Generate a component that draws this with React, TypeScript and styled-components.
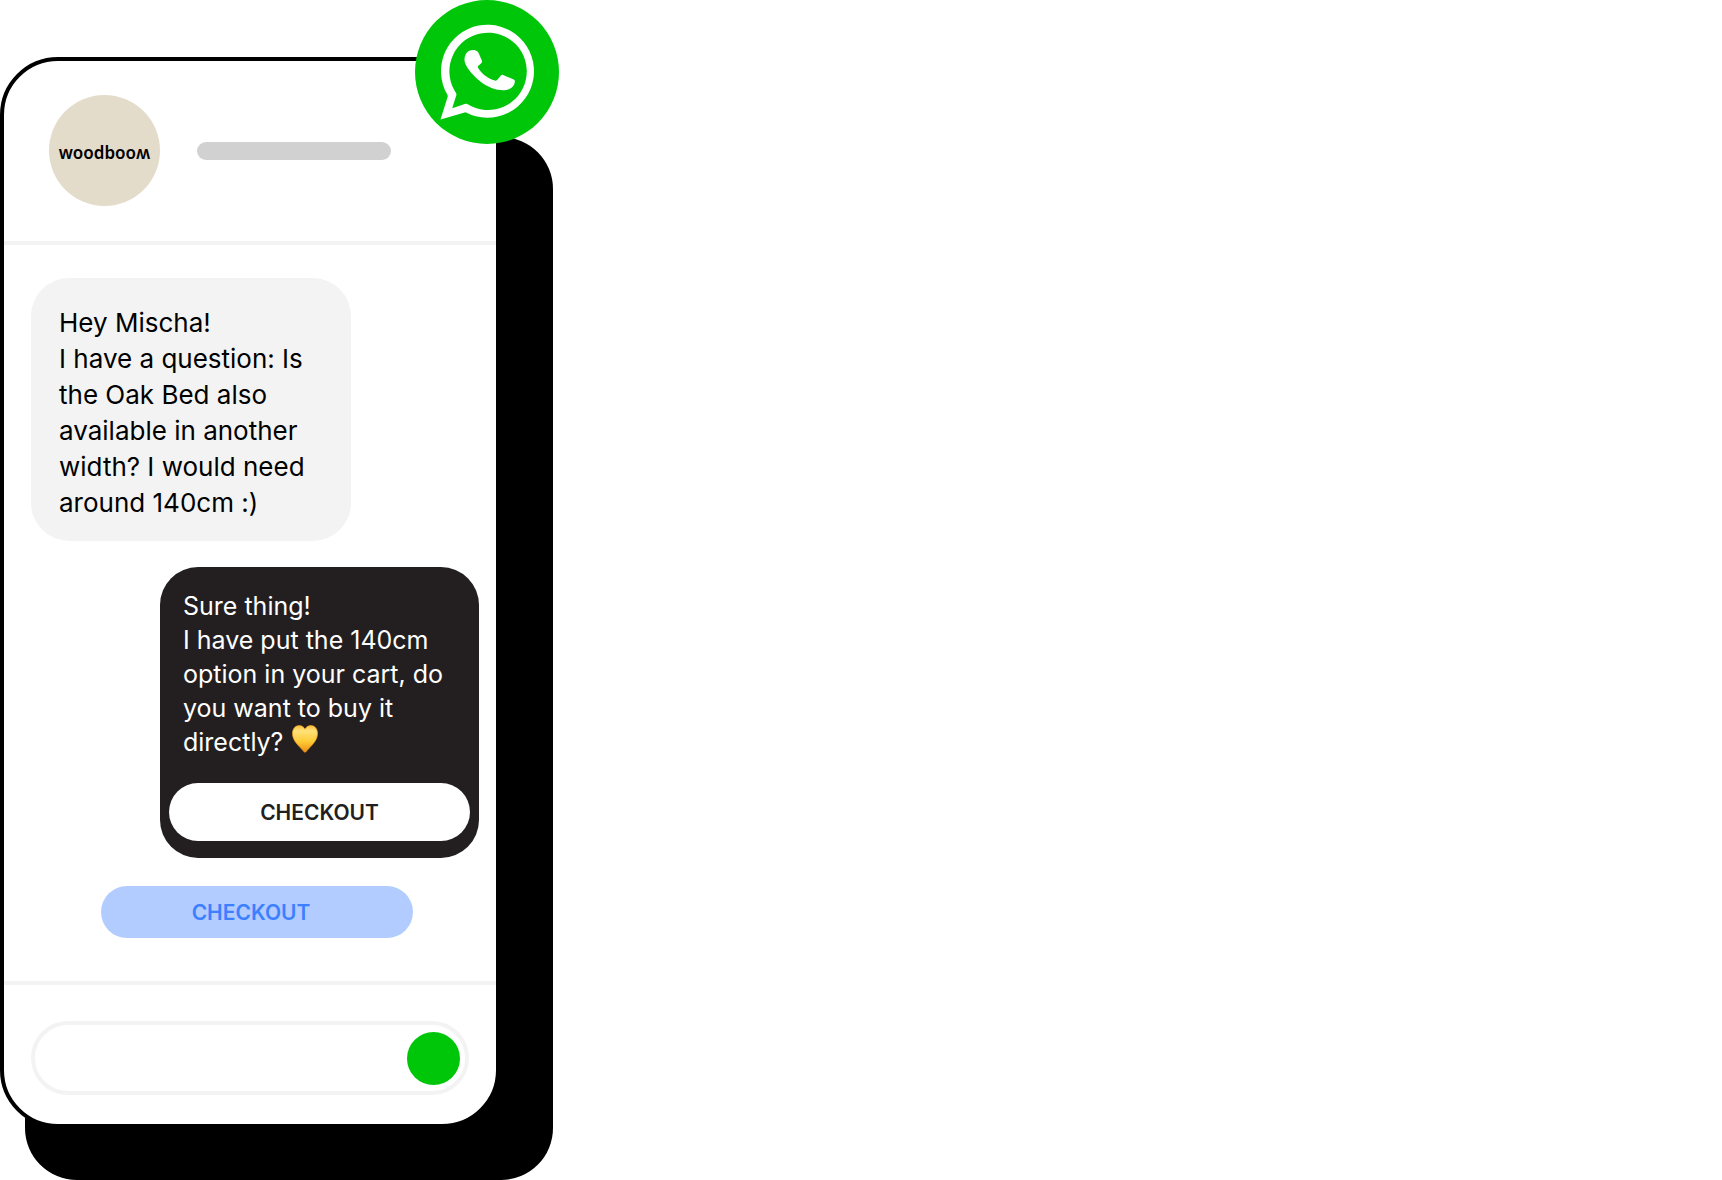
import React from "react";
import styled, { createGlobalStyle } from "styled-components";

const GlobalStyle = createGlobalStyle`
  *, *::before, *::after { box-sizing: border-box; }
  body { margin: 0; background: #fff; }
`;

const Stage = styled.main`
  position: relative;
  isolation: isolate;
  width: 100%;
  max-width: 553px;
  padding: 57px 53px 52px 0;
  font-family: Inter, "Liberation Sans", sans-serif;

  &::before {
    content: "";
    position: absolute;
    z-index: -1;
    inset: 137px 0 0 25px;
    border-radius: 52px;
    background: #000;
  }
`;

const Phone = styled.section`
  display: flex;
  flex-direction: column;
  border: 4px solid #000;
  border-radius: 58px;
  background: #fff;
`;

const Badge = styled.svg`
  position: absolute;
  top: 0;
  right: -6px;
  width: 144px;
  height: 144px;
`;

const Header = styled.header`
  display: flex;
  align-items: center;
  gap: 37px;
  padding: 34px 45px 35px;
  border-bottom: 4px solid #f3f3f3;
`;

const Avatar = styled.div`
  display: flex;
  align-items: center;
  justify-content: center;
  flex: none;
  width: 111px;
  height: 111px;
  padding-top: 4px;
  border-radius: 50%;
  background: #e4dccb;
  color: #000;
  font: 600 17px/24px "Noto Sans", sans-serif;
`;

const NameBar = styled.div`
  width: 194px;
  height: 18px;
  border-radius: 9px;
  background: #d1d1d1;
`;

const Messages = styled.div`
  display: flex;
  flex-direction: column;
  padding: 33px 17px 43px 27px;
`;

const Bubble = styled.article<{ $mine?: boolean }>`
  display: flex;
  flex-direction: column;
  gap: 24px;
  align-self: ${(p) => (p.$mine ? "flex-end" : "flex-start")};
  width: 100%;
  max-width: ${(p) => (p.$mine ? 319 : 320)}px;
  margin-bottom: ${(p) => (p.$mine ? 28 : 26)}px;
  padding: ${(p) => (p.$mine ? "22px 9px 17px" : "27px 9px 20px")};
  border-radius: 38px;
  background: ${(p) => (p.$mine ? "#231f20" : "#f3f3f3")};
  color: ${(p) => (p.$mine ? "#fff" : "#000")};
`;

const Text = styled.p<{ $mine?: boolean }>`
  margin: 0;
  padding: 0 ${(p) => (p.$mine ? 14 : 19)}px;
  font-size: ${(p) => (p.$mine ? 25 : 26)}px;
  line-height: ${(p) => (p.$mine ? 34 : 36)}px;
  white-space: nowrap;
`;

const HeartIcon = styled.svg`
  width: 26px;
  height: 28px;
  margin-left: 2px;
  vertical-align: -2px;
`;

const Pill = styled.button<{ $reply?: boolean }>`
  display: flex;
  align-items: center;
  justify-content: center;
  width: ${(p) => (p.$reply ? "312px" : "100%")};
  height: ${(p) => (p.$reply ? 52 : 58)}px;
  margin: 0 0 0 ${(p) => (p.$reply ? 70 : 0)}px;
  padding: 1px ${(p) => (p.$reply ? 12 : 0)}px 0 0;
  border: 0;
  border-radius: 30px;
  background: ${(p) => (p.$reply ? "#b3ccff" : "#fff")};
  color: ${(p) => (p.$reply ? "#3d80ff" : "#231f20")};
  font: 600 21px/28px Inter, "Liberation Sans", sans-serif;
  cursor: pointer;
`;

const Composer = styled.form`
  display: flex;
  padding: 36px 27px 29px;
  border-top: 4px solid #f3f3f3;
`;

const Field = styled.div`
  display: flex;
  align-items: center;
  flex: 1;
  min-width: 0;
  height: 74px;
  padding: 0 5px 0 24px;
  border: 4px solid #f3f3f3;
  border-radius: 37px;
`;

const Input = styled.input`
  flex: 1;
  width: 100%;
  min-width: 0;
  border: 0;
  outline: 0;
  background: transparent;
  font: 24px/34px Inter, sans-serif;
`;

const Send = styled.button`
  flex: none;
  width: 53px;
  height: 53px;
  padding: 0;
  border: 0;
  border-radius: 50%;
  background: #00c60a;
  cursor: pointer;
`;

function WhatsAppBadge() {
  return (
    <Badge viewBox="0 0 144 144" role="img" aria-label="WhatsApp">
      <circle cx="72" cy="72" r="72" fill="#00c60a" />
      <g transform="translate(0 .6)" fill="#fff">
        <path
          fillRule="evenodd"
          d="M25.5 119 L32.6 96.5 Q33 95.4 32.4 94.2 A46.5 46.5 0 1 1 50.5 111.6 Z M37.2 107.7 L50.5 103.2 Q51.5 103 52.3 103.4 A38.7 38.7 0 1 0 39.5 90 L41 92.4 Q41.7 93.4 41.3 94.6 Z"
        />
        <path
          transform="translate(-14.5 0) scale(.3333)"
          d="M205 151C214 147 226 147 231 153Q235 157 237 163L244 180Q246 184 243 187L233 196Q231 199 233 202C246 222 264 234 283 240Q287 241 290 238L301 225Q304 222 308 223L340 237Q344 239 343 243C342 258 330 268 312 269C290 270 262 262 236 240C212 220 194 197 192 180C191 166 197 155 205 151Z"
        />
      </g>
    </Badge>
  );
}

function Heart() {
  return (
    <HeartIcon viewBox="0 0 26 27" preserveAspectRatio="none" role="img" aria-label="yellow heart">
      <defs>
        <linearGradient id="heartFill" x1="0" y1="0" x2="0" y2="1">
          <stop offset="0" stopColor="#f9c23c" />
          <stop offset=".2" stopColor="#ffe27a" />
          <stop offset=".6" stopColor="#fdcb35" />
          <stop offset="1" stopColor="#ee8a12" />
        </linearGradient>
      </defs>
      <path
        fill="url(#heartFill)"
        stroke="#f0a029"
        strokeWidth=".7"
        d="M13 4C11.5 1.5 9.5 .6 7.2 .6C3.2 .6 .5 3.8 .5 8.3C.5 14 5 18.500 8.500 22C10.800 24.300 12.500 26.400 13 26.400C13.500 26.400 15.200 24.300 17.500 22C21 18.500 25.500 14 25.500 8.300C25.500 3.800 22.800 .6 18.800 .6C16.500 .6 14.500 1.500 13 4Z"
      />
    </HeartIcon>
  );
}

export default function App() {
  return (
    <>
      <GlobalStyle />
      <Stage>
        <Phone>
          <Header>
            <Avatar>woodbooʍ</Avatar>
            <NameBar />
          </Header>
          <Messages>
            <Bubble>
              <Text>
                Hey Mischa!
                <br />I have a question: Is
                <br />
                the Oak Bed also
                <br />
                available in another
                <br />
                width? I would need
                <br />
                around 140cm :)
              </Text>
            </Bubble>
            <Bubble $mine>
              <Text $mine>
                Sure thing!
                <br />I have put the 140cm
                <br />
                option in your cart, do
                <br />
                you want to buy it
                <br />
                directly? <Heart />
              </Text>
              <Pill type="button">CHECKOUT</Pill>
            </Bubble>
            <Pill type="button" $reply>
              CHECKOUT
            </Pill>
          </Messages>
          <Composer onSubmit={(e) => e.preventDefault()}>
            <Field>
              <Input type="text" aria-label="Message" />
              <Send type="submit" aria-label="Send" />
            </Field>
          </Composer>
        </Phone>
        <WhatsAppBadge />
      </Stage>
    </>
  );
}
